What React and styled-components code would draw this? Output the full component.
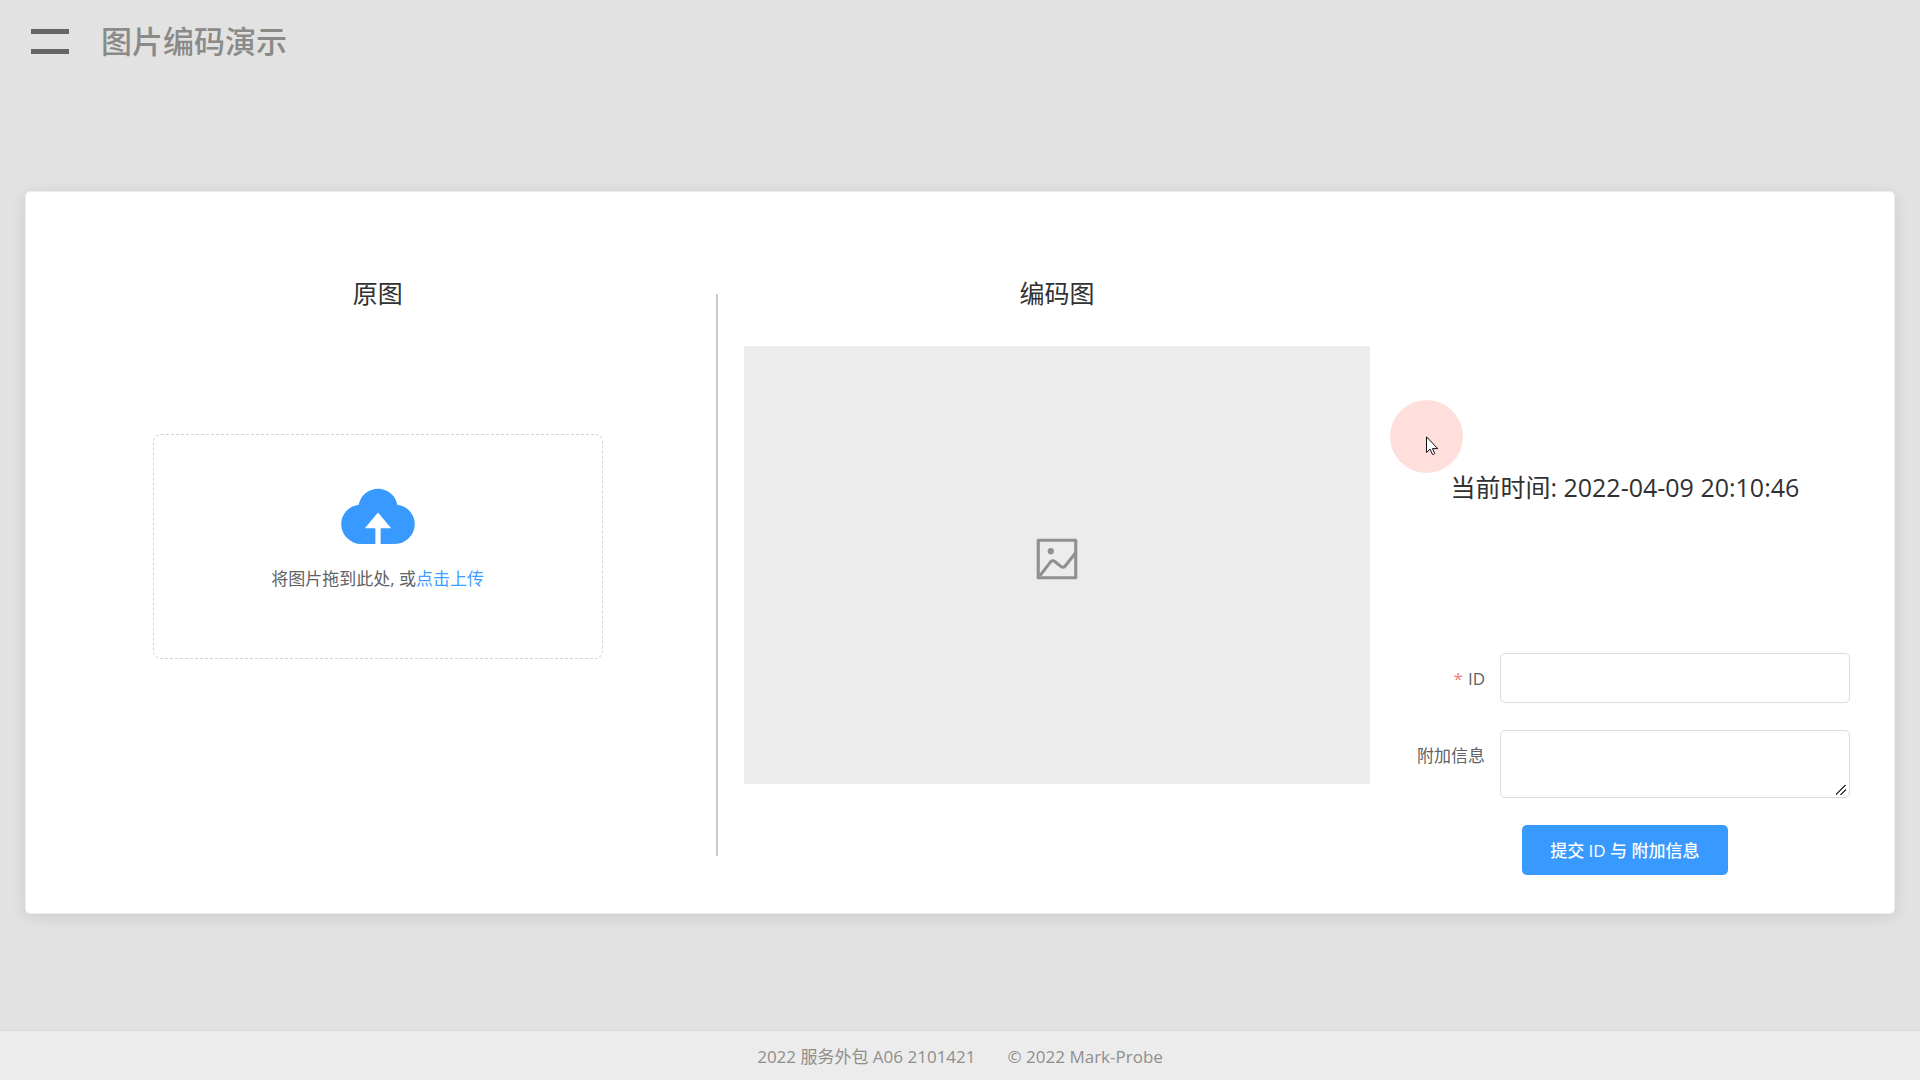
import React from "react";
import styled, { createGlobalStyle } from "styled-components";

const GlobalStyle = createGlobalStyle`
  *, *::before, *::after { box-sizing: border-box; }
  body {
    margin: 0;
    background: #e2e2e2;
    color: #303133;
    font-family: "Open Sans", "Noto Sans CJK SC", sans-serif;
    font-size: 17px;
    line-height: 26px;
  }
`;

const Page = styled.div`
  min-height: 100vh;
  display: flex;
  flex-direction: column;
`;

const Header = styled.header`
  display: flex;
  align-items: center;
  gap: 32px;
  padding: 20px 31px 12px;
`;

const MenuButton = styled.button`
  display: flex;
  flex-direction: column;
  gap: 15px;
  padding: 0;
  border: 0;
  background: none;
  cursor: pointer;
`;

const MenuBar = styled.span`
  width: 38px;
  height: 5px;
  background: #666;
`;

const PageTitle = styled.h1`
  margin: 0;
  font-size: 31px;
  line-height: 43px;
  font-weight: 500;
  color: #8a8a88;
`;

const Main = styled.main`
  flex: 1;
  display: flex;
  align-items: center;
  padding: 24px 25px;
`;

const Card = styled.section`
  flex: 1;
  display: grid;
  grid-template-columns: 677fr 2px 26px 625fr 30px 450fr;
  padding: 86px 44px 38px 13px;
  border: 1px solid #ebeef5;
  border-radius: 5px;
  background: #fff;
  box-shadow: 0 3px 15px rgba(0, 0, 0, 0.1);
`;

const Panel = styled.div`
  grid-column: ${(p) => p.$column};
  display: flex;
  flex-direction: column;
  align-items: center;
  min-width: 0;
`;

const ControlPanel = styled(Panel)`
  position: relative;
  padding-top: 194px;
  gap: 151px;
`;

const Divider = styled.div`
  grid-column: 2;
  margin: 16px 0 19px;
  background: #c9c9c9;
`;

const Heading = styled.h2`
  margin: 0;
  font-size: 25px;
  line-height: 30px;
  font-weight: 400;
`;

const DropZone = styled.div`
  width: 450px;
  max-width: 100%;
  margin-top: 126px;
  padding: 38px 16px 66px;
  display: flex;
  flex-direction: column;
  align-items: center;
  gap: 9px;
  border: 1px dashed #d4d4d4;
  border-radius: 8px;
  color: #606266;
`;

const CloudIcon = styled.svg`
  width: 84px;
  height: 84px;
  fill: #3899ff;
`;

const DropText = styled.p`
  margin: 0;
`;

const UploadLink = styled.a`
  color: #409eff;
  text-decoration: none;
`;

const Preview = styled.div`
  width: 100%;
  aspect-ratio: 625 / 438;
  margin-top: 38px;
  padding-bottom: 12px;
  display: flex;
  align-items: center;
  justify-content: center;
  background: #ececec;
`;

const PictureIcon = styled.svg`
  width: 50px;
  height: 50px;
  fill: #909090;
`;

const Form = styled.form`
  width: 100%;
  display: grid;
  grid-template-columns: 1fr 350px;
  column-gap: 15px;
  row-gap: 27px;
`;

const Label = styled.label`
  padding: 13px 0 11px;
  text-align: right;
  color: #606266;
`;

const Required = styled.span`
  margin-right: 5px;
  color: #f08078;
`;

const TextInput = styled.input`
  width: 100%;
  height: 50px;
  padding: 0 14px;
  border: 1px solid #dcdcdf;
  border-radius: 5px;
  background: #fff;
  font: inherit;
  outline: none;
`;

const TextArea = styled.textarea`
  display: block;
  width: 100%;
  height: 68px;
  padding: 6px 14px;
  border: 1px solid #dcdcdf;
  border-radius: 5px;
  background: #fff;
  font: inherit;
  resize: vertical;
  outline: none;

  &::-webkit-resizer {
    background: linear-gradient(
        135deg,
        transparent 44%,
        #444 45%,
        #444 53%,
        transparent 54%,
        transparent 67%,
        #444 68%,
        #444 76%,
        transparent 77%
      )
      2px 3px / 10px 10px no-repeat;
  }
`;

const SubmitButton = styled.button`
  grid-column: 1 / -1;
  justify-self: center;
  height: 50px;
  padding: 1px 28px 0;
  border: 0;
  border-radius: 5px;
  background: #3899ff;
  color: #fff;
  font: inherit;
  font-weight: 500;
  cursor: pointer;
`;

const Pointer = styled.div`
  position: absolute;
  left: -10px;
  top: 122px;
  width: 73px;
  height: 73px;
  padding: 36px 0 0 36px;
  border-radius: 50%;
  background: #ffdfdc;
  pointer-events: none;
`;

const PointerIcon = styled.svg`
  display: block;
  width: 13px;
  height: 20px;
`;

const Footer = styled.footer`
  display: flex;
  justify-content: center;
  flex-wrap: wrap;
  gap: 32px;
  padding: 13px 16px 10px;
  border-top: 1px solid #d9dadc;
  background: #ececec;
  color: #8f8f8d;
`;

export default function App() {
  return (
    <Page>
      <GlobalStyle />
      <Header>
        <MenuButton type="button" aria-label="菜单">
          <MenuBar />
          <MenuBar />
        </MenuButton>
        <PageTitle>图片编码演示</PageTitle>
      </Header>
      <Main>
        <Card>
          <Panel $column={1}>
            <Heading>原图</Heading>
            <DropZone>
              <CloudIcon viewBox="0 0 1024 1024" aria-hidden="true">
                <path d="M544 864V672h128L512 480 352 672h128v192H320v-1.6c-5.376.32-10.496 1.6-16 1.6A240 240 0 0 1 64 624c0-123.136 93.12-223.488 212.608-237.248A239.808 239.808 0 0 1 512 192a239.872 239.872 0 0 1 235.456 194.752c119.488 13.76 212.48 114.112 212.48 237.248a240 240 0 0 1-240 240c-5.376 0-10.56-1.28-16-1.6v1.6H544z" />
              </CloudIcon>
              <DropText>
                将图片拖到此处, 或<UploadLink href="#upload">点击上传</UploadLink>
              </DropText>
            </DropZone>
          </Panel>
          <Divider />
          <Panel $column={4}>
            <Heading>编码图</Heading>
            <Preview>
              <PictureIcon viewBox="0 0 1024 1024" aria-hidden="true">
                <path d="M160 160v704h704V160H160zm-32-64h768a32 32 0 0 1 32 32v768a32 32 0 0 1-32 32H128a32 32 0 0 1-32-32V128a32 32 0 0 1 32-32z" />
                <path d="M384 288q64 0 64 64t-64 64q-64 0-64-64t64-64zM185.408 876.992l-50.816-38.912L350.72 556.032a96 96 0 0 1 134.592-17.856l1.856 1.472 122.88 99.136a32 32 0 0 0 44.992-4.864l216-269.888 49.92 39.936-215.808 269.824-.256.32a96 96 0 0 1-135.04 14.464l-122.88-99.072-.64-.512a32 32 0 0 0-44.8 5.952L185.408 876.992z" />
              </PictureIcon>
            </Preview>
          </Panel>
          <ControlPanel $column={6}>
            <Heading as="p">当前时间: 2022-04-09 20:10:46</Heading>
            <Form onSubmit={(e) => e.preventDefault()}>
              <Label htmlFor="mark-id">
                <Required>*</Required>ID
              </Label>
              <TextInput id="mark-id" type="text" />
              <Label htmlFor="mark-extra">附加信息</Label>
              <TextArea id="mark-extra" />
              <SubmitButton type="submit">提交 ID 与 附加信息</SubmitButton>
            </Form>
            <Pointer>
              <PointerIcon viewBox="0 0 13 20" aria-hidden="true">
                <path
                  d="M.5.8v15.7l3.6-3.4 2.3 5.2c.8.6 2 .1 2.3-.8l-2.2-4.9h5.2z"
                  fill="#fff"
                  stroke="#111"
                />
              </PointerIcon>
            </Pointer>
          </ControlPanel>
        </Card>
      </Main>
      <Footer>
        <span>2022 服务外包 A06 2101421</span>
        <span>© 2022 Mark-Probe</span>
      </Footer>
    </Page>
  );
}
